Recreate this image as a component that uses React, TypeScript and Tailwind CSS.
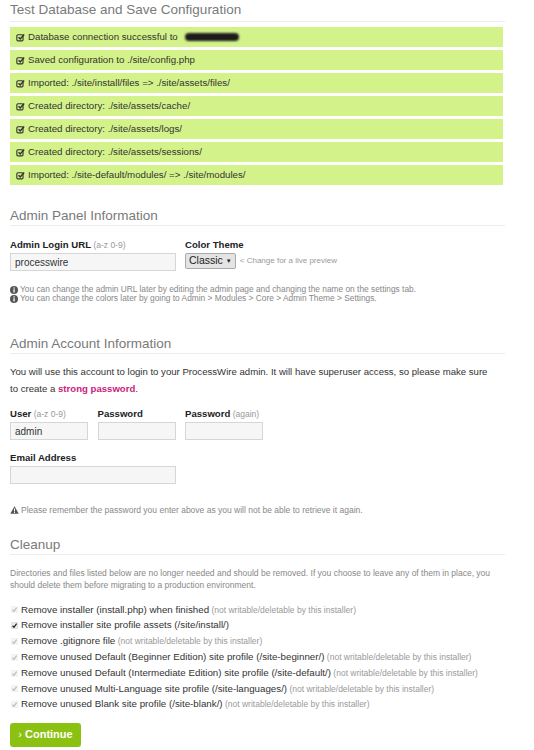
import type { ReactNode } from "react"

const font = { fontFamily: '"Liberation Sans", Arial, sans-serif' }

const results = [
  "Database connection successful to",
  "Saved configuration to ./site/config.php",
  "Imported: ./site/install/files => ./site/assets/files/",
  "Created directory: ./site/assets/cache/",
  "Created directory: ./site/assets/logs/",
  "Created directory: ./site/assets/sessions/",
  "Imported: ./site-default/modules/ => ./site/modules/",
]

const cleanup = [
  { label: "Remove installer (install.php) when finished", locked: true },
  { label: "Remove installer site profile assets (/site/install/)", locked: false },
  { label: "Remove .gitignore file", locked: true },
  { label: "Remove unused Default (Beginner Edition) site profile (/site-beginner/)", locked: true },
  { label: "Remove unused Default (Intermediate Edition) site profile (/site-default/)", locked: true },
  { label: "Remove unused Multi-Language site profile (/site-languages/)", locked: true },
  { label: "Remove unused Blank site profile (/site-blank/)", locked: true },
]

function CheckSquare() {
  return (
    <svg width="9" height="9" viewBox="0 0 16 16" className="shrink-0">
      <rect x="1.5" y="3" width="11" height="11" rx="2" fill="none" stroke="#333" strokeWidth="2" />
      <path d="M4.5 7.5 L7.5 10.5 L14.5 2.5" fill="none" stroke="#333" strokeWidth="2.6" />
    </svg>
  )
}

function InfoIcon() {
  return (
    <svg width="8" height="8" viewBox="0 0 16 16" className="shrink-0">
      <circle cx="8" cy="8" r="8" fill="#555" />
      <rect x="6.8" y="6.5" width="2.6" height="6.5" fill="#fff" />
      <circle cx="8.1" cy="4" r="1.5" fill="#fff" />
    </svg>
  )
}

function WarnIcon() {
  return (
    <svg width="9" height="8" viewBox="0 0 18 16" className="shrink-0">
      <path d="M9 0.5 L17.5 15.5 H0.5 Z" fill="#555" />
      <rect x="8" y="5" width="2" height="6" fill="#fff" />
      <rect x="8" y="12.2" width="2" height="2" fill="#fff" />
    </svg>
  )
}

function Tick({ locked }: { locked: boolean }) {
  return (
    <svg width="7" height="7" viewBox="0 0 16 16" className="ml-[1px] shrink-0">
      <rect x="0.5" y="0.5" width="15" height="15" rx="3" fill={locked ? "#f5f5f5" : "#ececec"} stroke={locked ? "#e6e6e6" : "#c4c4c4"} />
      <path d="M3.5 8.5 L6.8 12 L12.8 3.8" fill="none" stroke={locked ? "#bdbdbd" : "#222"} strokeWidth="2.8" />
    </svg>
  )
}

function Heading({ children, className }: { children: ReactNode; className?: string }) {
  return (
    <h2 className={`border-b border-[#ececec] pb-[1px] text-[13.5px] leading-[16px] font-normal text-[#7a7a7a] ${className ?? ""}`}>
      {children}
    </h2>
  )
}

function Field({ label, hint, value, width }: { label: string; hint?: string; value?: string; width: string }) {
  return (
    <div className="flex flex-col">
      <label className="text-[9.6px] leading-[12px] font-bold text-[#222]">
        {label}
        {hint && <span className="font-normal text-[8.5px] text-[#999]"> {hint}</span>}
      </label>
      <input
        readOnly
        value={value ?? ""}
        className={`mt-[2px] h-[18px] ${width} border border-[#d6d6d6] bg-[#f6f6f6] px-[4px] text-[10px] text-[#333] outline-none`}
      />
    </div>
  )
}

export default function App() {
  return (
    <div style={font} className="min-h-[750px] w-[534px] bg-white px-[10px] pt-[2px] text-[#333]">
      <div className="w-[495px]">
        <Heading className="pb-[3px]">Test Database and Save Configuration</Heading>

        {/* Install results */}
        <div className="mt-[5px] flex w-[493px] flex-col gap-[3px]">
          {results.map((r, i) => (
            <div key={r} className="flex h-[20px] items-center gap-[3px] bg-[#d4f28a] px-[6px] text-[9.7px] text-[#333]">
              <CheckSquare />
              <span>{r}</span>
              {i === 0 && <span className="ml-[4px] h-[8px] w-[54px] rounded-full bg-[#1c1c1c] blur-[1px]" />}
            </div>
          ))}
        </div>

        {/* Admin panel */}
        <Heading className="mt-[23px]">Admin Panel Information</Heading>
        <div className="mt-[13px] flex gap-[9px]">
          <Field label="Admin Login URL" hint="(a-z 0-9)" value="processwire" width="w-[166px]" />
          <div className="flex flex-col">
            <label className="text-[9.6px] leading-[12px] font-bold text-[#222]">Color Theme</label>
            <div className="mt-[2px] flex items-center gap-[4px]">
              <div className="flex h-[16px] items-center gap-[3px] rounded-[2px] border border-[#aaa] bg-[#e4e4e4] px-[3px] text-[10.5px] text-[#222]">
                Classic <span className="text-[6px]">▼</span>
              </div>
              <span className="text-[8px] text-[#999]">&lt; Change for a live preview</span>
            </div>
          </div>
        </div>
        <div className="mt-[14px] text-[8.35px] leading-[9px] text-[#888]">
          <p className="flex items-center gap-[2px]"><InfoIcon /> You can change the admin URL later by editing the admin page and changing the name on the settings tab.</p>
          <p className="flex items-center gap-[2px]"><InfoIcon /> You can change the colors later by going to Admin &gt; Modules &gt; Core &gt; Admin Theme &gt; Settings.</p>
        </div>

        {/* Admin account */}
        <Heading className="mt-[33px]">Admin Account Information</Heading>
        <p className="mt-[9px] w-[488px] text-[9.6px] leading-[17px] text-[#333]">
          You will use this account to login to your ProcessWire admin. It will have superuser access, so please make sure to create a{" "}
          <span className="font-bold text-[#c8237a]">strong password</span>.
        </p>
        <div className="mt-[11px] flex gap-[9.5px]">
          <Field label="User" hint="(a-z 0-9)" value="admin" width="w-[78px]" />
          <Field label="Password" width="w-[78px]" />
          <Field label="Password" hint="(again)" width="w-[78px]" />
        </div>
        <div className="mt-[12px]">
          <Field label="Email Address" width="w-[166px]" />
        </div>
        <p className="mt-[21px] flex items-center gap-[2px] text-[8.5px] leading-[10px] text-[#888]">
          <WarnIcon /> Please remember the password you enter above as you will not be able to retrieve it again.
        </p>

        {/* Cleanup */}
        <Heading className="mt-[22px]">Cleanup</Heading>
        <p className="mt-[12px] text-[8.5px] leading-[12px] text-[#888]">
          Directories and files listed below are no longer needed and should be removed. If you choose to leave any of them in place, you should delete them before migrating to a production environment.
        </p>
        <ul className="mt-[11px] flex flex-col">
          {cleanup.map((c) => (
            <li key={c.label} className="flex h-[15.8px] items-center gap-[3px] text-[9.75px] text-[#333]">
              <Tick locked={c.locked} />
              <span>
                {c.label}
                {c.locked && <span className="text-[8.5px] text-[#999]"> (not writable/deletable by this installer)</span>}
              </span>
            </li>
          ))}
        </ul>
        <button className="mt-[10px] flex h-[24px] w-[71px] items-center justify-center gap-[3px] rounded-[3px] bg-[#8bc212] text-[11px] font-bold text-white">
          <span className="font-normal">›</span> Continue
        </button>
      </div>
    </div>
  )
}
